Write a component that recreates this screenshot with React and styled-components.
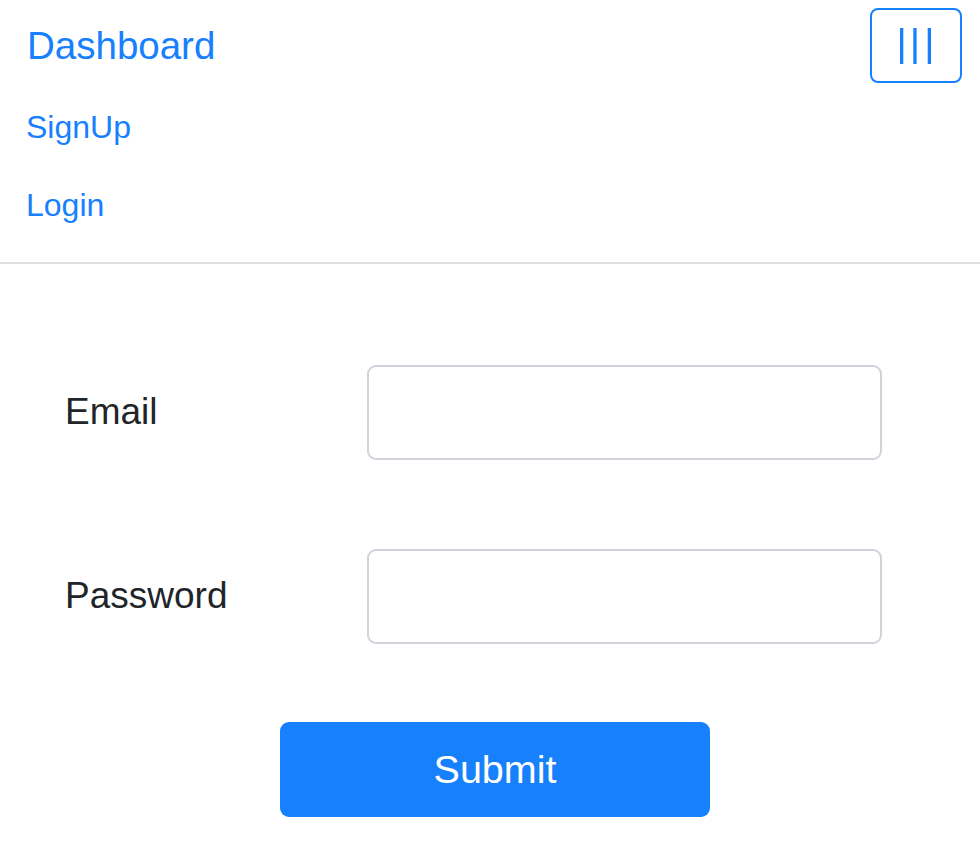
import styled, { createGlobalStyle } from "styled-components";

const GlobalStyle = createGlobalStyle`
  body {
    margin: 0;
    background: #ffffff;
    font-family: "Liberation Sans", Arial, sans-serif;
    color: #212529;
  }
`;

const Nav = styled.nav`
  padding: 8px 18px 18px 25px;
  border-bottom: 2px solid #dfdfdf;
`;

const TopRow = styled.div`
  display: flex;
  justify-content: space-between;
  align-items: center;
  height: 75px;
`;

const Brand = styled.a`
  margin-left: 2px;
  font-size: 38.5px;
  line-height: 48px;
  color: #1780fc;
  text-decoration: none;
`;

const Toggler = styled.button`
  width: 92px;
  height: 75px;
  box-sizing: border-box;
  border: 2px solid #1780fc;
  border-radius: 8px;
  background: transparent;
  display: flex;
  align-items: center;
  justify-content: center;
  padding: 0;
`;

const LinkList = styled.div`
  display: flex;
  flex-direction: column;
  margin-top: 5px;
`;

const NavLink = styled.a`
  display: block;
  padding: 16px 0 16px 1px;
  font-size: 32px;
  line-height: 46px;
  color: #1780fc;
  text-decoration: none;
`;

const Form = styled.form`
  width: 866px;
  padding: 101px 0 0 63px;
  display: flex;
  flex-direction: column;
  gap: 89px;
`;

const Row = styled.div`
  display: grid;
  grid-template-columns: 304px 515px;
  align-items: center;
  height: 95px;
`;

const Label = styled.label`
  padding-left: 2px;
  font-size: 37px;
  line-height: 1.2;
  color: #212529;
`;

const Input = styled.input`
  box-sizing: border-box;
  width: 515px;
  height: 95px;
  border: 2px solid #ced4da;
  border-radius: 9px;
  background: #ffffff;
  font-size: 38px;
  padding: 0 24px;
  outline: none;
`;

const SubmitRow = styled.div`
  display: flex;
  justify-content: center;
  margin: -11px 0 0 -2px;
`;

const SubmitButton = styled.button`
  width: 430px;
  height: 95px;
  border: none;
  border-radius: 9px;
  background: #1780fc;
  color: #ffffff;
  font-family: "Liberation Sans", Arial, sans-serif;
  font-size: 39.5px;
  cursor: pointer;
`;

const MenuIcon = () => (
  <svg width="34" height="36" viewBox="0 0 34 36">
    <rect x="1" y="0" width="3.3" height="36" fill="#1780fc" />
    <rect x="14.3" y="0" width="3.3" height="36" fill="#1780fc" />
    <rect x="28.7" y="0" width="3.3" height="36" fill="#1780fc" />
  </svg>
);

const App = () => {
  return (
    <>
      <GlobalStyle />
      <Nav>
        <TopRow>
          <Brand href="#">Dashboard</Brand>
          <Toggler type="button" aria-label="Toggle navigation">
            <MenuIcon />
          </Toggler>
        </TopRow>
        <LinkList>
          <NavLink href="#">SignUp</NavLink>
          <NavLink href="#">Login</NavLink>
        </LinkList>
      </Nav>
      <Form onSubmit={(e) => e.preventDefault()}>
        <Row>
          <Label htmlFor="email">Email</Label>
          <Input id="email" type="email" />
        </Row>
        <Row>
          <Label htmlFor="password">Password</Label>
          <Input id="password" type="password" />
        </Row>
        <SubmitRow>
          <SubmitButton type="submit">Submit</SubmitButton>
        </SubmitRow>
      </Form>
    </>
  );
};

export default App;
